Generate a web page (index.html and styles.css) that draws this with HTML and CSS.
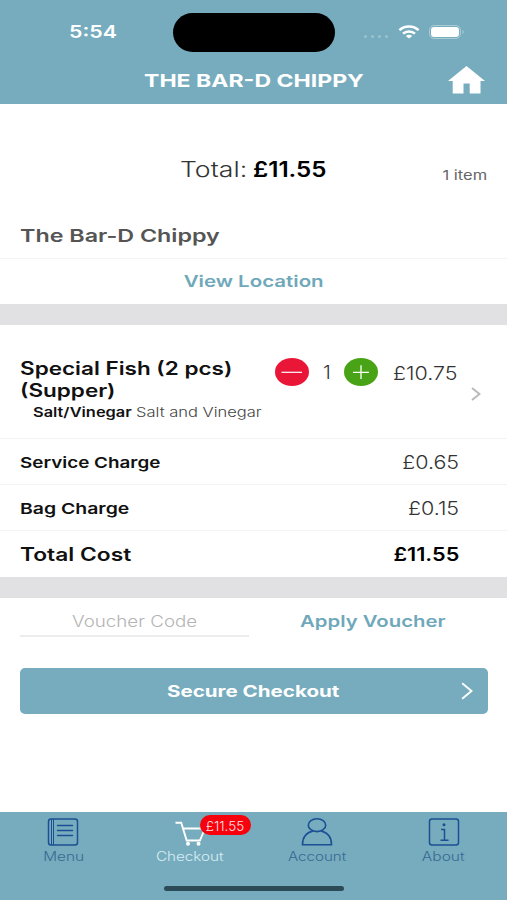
FILE: index.html
```html
<!DOCTYPE html>
<html lang="en">
<head>
<meta charset="utf-8">
<title>The Bar-D Chippy</title>
<link rel="stylesheet" href="styles.css">
</head>
<body>
<div class="app">
  <header class="header">
    <div class="status">
      <div class="clock"><span class="t t-clock">5:54</span></div>
      <div class="island"></div>
      <div class="signals">
        <div class="dots"><i></i><i></i><i></i><i></i></div>
        <svg class="wifi" viewBox="0 0 22 14"><g fill="none" stroke="#fff" stroke-width="2.5"><path d="M1.4 5.2C6.6.2 15.4.2 20.6 5.2"/><path d="M5 8.700c3.300-3.100 8.700-3.100 12 0"/></g><path fill="#fff" d="M11 13.600l-3.200-2.700c1.800-1.600 4.600-1.600 6.400 0z"/></svg>
        <svg class="battery" viewBox="0 0 36 14"><rect x=".5" y=".5" width="31" height="13" rx="4.500" fill="none" stroke="#a9cbd6"/><rect x="2" y="2" width="28" height="10" rx="3" fill="#fff"/><path d="M33.500 5c1.700.6 1.700 3.400 0 4z" fill="#a9cbd6"/></svg>
      </div>
    </div>
    <div class="titlebar">
      <h1 class="t t-title">THE BAR-D CHIPPY</h1>
      <svg class="home" viewBox="0 0 37 28"><path fill="#fff" d="M18.500 0L37 15h-4.500v12.500H21.700V17.500h-6.200v10H4.700V15H0z"/></svg>
    </div>
  </header>

  <main class="main">
    <section class="summary">
      <div class="sum-label"><span class="t t-total">Total:</span></div>
      <div class="sum-value"><span class="t t-amount">£11.55</span></div>
      <div class="sum-count"><span class="t t-count">1 item</span></div>
    </section>
    <div class="row shop"><span class="t t-shop">The Bar-D Chippy</span></div>
    <div class="row location"><span class="t t-location">View Location</span></div>
    <div class="band"></div>

    <section class="item">
      <div class="item-info">
        <div class="line"><span class="t t-item">Special Fish (2 pcs)</span></div>
        <div class="line"><span class="t t-item">(Supper)</span></div>
        <div class="mods">
          <div class="mod-name"><span class="t t-mod">Salt/Vinegar</span></div>
          <div class="mod-value"><span class="t t-modv">Salt and Vinegar</span></div>
        </div>
      </div>
      <div class="stepper">
        <svg class="round" viewBox="0 0 34 28"><ellipse cx="17" cy="14" rx="17" ry="14" fill="#e91638"/><path d="M6.500 14.300h20.500" stroke="#fff" stroke-width="1.200"/></svg>
        <span class="t t-qty">1</span>
        <svg class="round" viewBox="0 0 34 28"><ellipse cx="17" cy="14" rx="17" ry="14" fill="#48a317"/><path d="M9 14.300h16M17 7.300v13.700" stroke="#fff" stroke-width="1.300"/></svg>
      </div>
      <div class="item-price"><span class="t t-price">£10.75</span></div>
      <svg class="chev" viewBox="0 0 10 14"><path d="M1 1l7.500 6L1 13" fill="none" stroke="#b9b9b9" stroke-width="2"/></svg>
    </section>
    <div class="row charge"><span class="t t-service">Service Charge</span><span class="t t-num">£0.65</span></div>
    <div class="row charge"><span class="t t-bag">Bag Charge</span><span class="t t-num">£0.15</span></div>
    <div class="row charge last"><span class="t t-cost">Total Cost</span><span class="t t-num t-sum">£11.55</span></div>
    <div class="band"></div>

    <section class="voucher">
      <div class="field"><span class="t t-code">Voucher Code</span></div>
      <div class="apply"><span class="t t-apply">Apply Voucher</span></div>
    </section>
    <div class="checkout">
      <span class="t t-secure">Secure Checkout</span>
      <svg class="go" viewBox="0 0 12 18"><path d="M1.200 1.200L10.500 9l-9.300 7.800" fill="none" stroke="#fff" stroke-width="1.900"/></svg>
    </div>
  </main>

  <nav class="nav">
    <div class="tabs">
      <div class="tab">
        <svg class="icon" viewBox="0 0 32 28"><g fill="none" stroke="#1c4f93" stroke-width="1.500"><rect x="1.500" y="1" width="29" height="26" rx="2.500"/><path d="M4.500 1v26M6.500 1v26" stroke-width="1"/><path d="M10.500 7.500h15M10.500 12.500h15M10.500 17.500h15" stroke-linecap="round"/></g></svg>
        <span class="t t-menu">Menu</span>
      </div>
      <div class="tab active">
        <svg class="icon" viewBox="0 0 32 28"><path d="M1.500 4.700h5.700l5.500 17.800h13.200l5.100-12H9" fill="none" stroke="#fff" stroke-width="1.900"/><circle cx="14" cy="25.700" r="2" fill="#fff"/><circle cx="24.500" cy="25.700" r="2" fill="#fff"/></svg>
        <span class="t t-check">Checkout</span>
        <div class="badge"><span class="t t-badge">£11.55</span></div>
      </div>
      <div class="tab">
        <svg class="icon" viewBox="0 0 32 28"><g fill="none" stroke="#1c4f93" stroke-width="1.600"><ellipse cx="16" cy="7.200" rx="8.700" ry="6.400"/><path d="M12 13C5.500 14.500 1.500 19 1.500 26.700h29C30.500 19 26.500 14.500 20 13"/></g></svg>
        <span class="t t-account">Account</span>
      </div>
      <div class="tab">
        <svg class="icon" viewBox="0 0 32 28"><g fill="none" stroke="#1c4f93" stroke-width="1.500"><rect x="1.500" y="1" width="29" height="26" rx="2.500"/><path d="M13 11.500h3.500v10.700M12.500 22.200h8"/></g><circle cx="16" cy="6.700" r="1.500" fill="#1c4f93"/></svg>
        <span class="t t-about">About</span>
      </div>
    </div>
    <div class="indicator"></div>
  </nav>
</div>
</body>
</html>
```
FILE: styles.css
```css
* { box-sizing: border-box; }
body { margin: 0; background: #fff; font-family: Inter, "Liberation Sans", sans-serif; }
.app { width: 507px; height: 900px; display: flex; flex-direction: column; overflow: hidden; color: #111; }
svg { display: block; flex: none; }

/* Extended-width lettering: each label is stretched by its own factor */
.t { --w: 1; display: inline-block; white-space: nowrap; margin: 0; transform: scaleX(var(--w)); transform-origin: left center; }

.header { height: 104px; background: #76acbe; color: #fff; flex: none; }
.status { height: 58px; padding-top: 13px; display: grid; grid-template-columns: 173px 162px 1fr; }
.clock { padding-left: 69px; line-height: 38px; }
.island { height: 39px; border-radius: 20px; background: #000; }
.signals { height: 38px; display: flex; align-items: center; padding-left: 29px; }
.dots { display: flex; gap: 4px; padding-top: 9px; width: 34px; }
.dots i { width: 3px; height: 3px; border-radius: 50%; background: #9bc3d0; }
.wifi { width: 22px; height: 14px; }
.battery { width: 36px; height: 14px; margin-left: 9px; }
.titlebar { display: flex; justify-content: space-between; padding: 0 22px 0 144px; height: 46px; }
.titlebar h1 { line-height: 45px; }
.home { width: 37px; height: 28px; margin-top: 8px; }

.main { flex: 1; min-height: 0; }
.summary { height: 108px; padding-top: 44px; display: grid; grid-template-columns: 253px 1fr auto; }
.sum-label { padding-left: 180px; line-height: 43px; }
.sum-value { line-height: 43px; }
.sum-count { padding-right: 20px; line-height: 53px; }
.row { height: 46px; line-height: 46px; padding: 0 20px; border-bottom: 1px solid #f3f3f3; }
.row.shop { height: 47px; line-height: 48px; }
.row.location, .row.last { border-bottom: 0; }
.row.location { height: 45px; line-height: 45px; text-align: center; }
.location .t { transform-origin: center; }
.band { height: 21px; background: #e1e1e3; }

.item { height: 114px; padding: 32px 26px 0 20px; border-bottom: 1px solid #f3f3f3; display: grid; grid-template-columns: 254px 119px 1fr 10px; }
.item-info { padding-top: 1px; }
.line { height: 22px; line-height: 22px; }
.mods { display: flex; line-height: 19px; padding-left: 13px; }
.mod-name { flex: none; width: 103px; }
.stepper { display: flex; justify-content: space-between; align-items: center; height: 30px; width: 104px; padding-left: 1px; }
.round { width: 34px; height: 28px; }
.item-price { line-height: 32px; }
.chev { width: 10px; height: 14px; margin-top: 30px; }
.charge { display: flex; justify-content: space-between; padding-right: 48px; }

.voucher { height: 70px; padding: 0 20px; display: grid; grid-template-columns: 229px 1fr; }
.field { height: 39px; line-height: 47px; padding-left: 52px; border-bottom: 2px solid #ececee; }
.apply { line-height: 47px; padding-left: 51px; }
.checkout { height: 46px; margin: 0 19px 0 20px; padding: 0 15px 0 147px; border-radius: 5px; background: #76acbe; color: #fff; display: flex; align-items: center; justify-content: space-between; }
.go { width: 12px; height: 18px; }

.nav { height: 88px; background: #76acbe; flex: none; }
.tabs { display: grid; grid-template-columns: repeat(4, 1fr); height: 74px; }
.tab { position: relative; padding-top: 6px; display: flex; flex-direction: column; align-items: center; color: #386a93; }
.tab > .t { line-height: 21px; transform-origin: center; }
.tab.active { color: #d9edf4; }
.icon { width: 32px; height: 28px; }
.badge { position: absolute; left: 73px; top: 3px; width: 51px; height: 20px; border-radius: 10px; background: #f8000c; color: #fbe3e5; padding-left: 6px; line-height: 20px; }
.indicator { width: 180px; height: 5px; margin: 0 auto; border-radius: 3px; background: #2d4b57; }

.t-clock { --w: 1.22; font-size: 17.5px; font-weight: 600; }
.t-title { --w: 1.28; font-size: 18px; font-weight: 700; }
.t-total { --w: 1.24; font-size: 21.5px; font-weight: 300; color: #333; }
.t-amount { --w: 1.15; font-size: 21px; font-weight: 600; color: #000; }
.t-count { --w: 1.27; font-size: 13px; font-weight: 400; color: #666; transform-origin: right center; }
.t-shop { --w: 1.31; font-size: 17.8px; font-weight: 600; color: #555; }
.t-location { --w: 1.28; font-size: 16px; font-weight: 600; color: #6fa8ba; }
.t-item { --w: 1.25; font-size: 18px; font-weight: 600; }
.t-mod { --w: 1.26; font-size: 13px; font-weight: 600; }
.t-modv { --w: 1.27; font-size: 13px; font-weight: 300; color: #444; }
.t-qty { --w: 1.1; font-size: 18px; font-weight: 300; color: #333; }
.t-price { --w: 1.16; font-size: 18.5px; font-weight: 300; color: #333; }
.t-service { --w: 1.257; font-size: 15px; font-weight: 600; }
.t-bag { --w: 1.295; font-size: 15px; font-weight: 600; }
.t-service, .t-bag, .t-cost { line-height: 47px; }
.t-num { --w: 1.16; font-size: 18.5px; font-weight: 300; color: #333; transform-origin: right center; }
.t-cost { --w: 1.265; font-size: 18px; font-weight: 600; }
.t-sum { --w: 1.17; font-weight: 600; color: #000; }
.t-code { --w: 1.21; font-size: 15.5px; font-weight: 300; color: #b4b4b4; }
.t-apply { --w: 1.27; font-size: 16px; font-weight: 600; color: #6fa8ba; }
.t-secure { --w: 1.285; font-size: 16px; font-weight: 700; }
.t-menu { --w: 1.23; }
.t-check { --w: 1.22; }
.t-account { --w: 1.21; }
.t-about { --w: 1.24; }
.t-menu, .t-check, .t-account, .t-about { font-size: 12.5px; font-weight: 300; }
.t-badge { font-size: 13.5px; font-weight: 300; }
```
